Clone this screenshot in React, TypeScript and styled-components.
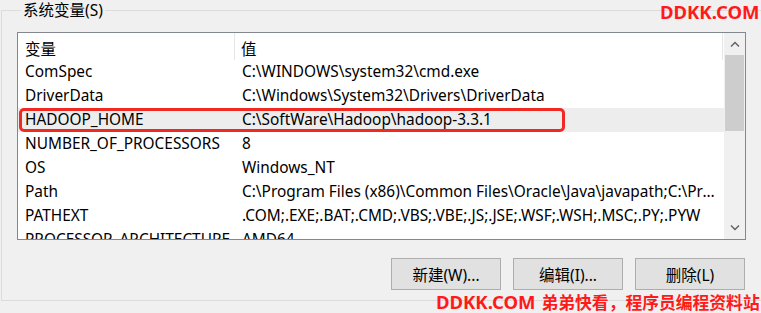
import React from "react";
import styled, { createGlobalStyle } from "styled-components";

const GlobalStyle = createGlobalStyle`
  html, body { margin: 0; padding: 0; background: #f0f0f0; }
  body { font-family: "Noto Sans", "Noto Sans CJK SC", sans-serif; color: #000; }
`;

const FONT = `"Noto Sans", "Noto Sans CJK SC", sans-serif`;

const Page = styled.div`
  position: relative;
  width: 761px;
  height: 313px;
  overflow: hidden;
  background: #f0f0f0;
`;

const Group = styled.fieldset`
  margin: 0 0 0 1px;
  padding: 0 0 0 15px;
  width: 800px;
  height: 301px;
  box-sizing: border-box;
  border: 1px solid #dcdcdc;
  min-inline-size: 0;
`;

const Legend = styled.legend`
  font-family: ${FONT};
  font-size: 15.5px;
  line-height: 20px;
  padding: 0 2px;
  margin-left: 4px;
  color: #000;
`;

const ListBox = styled.div`
  margin-top: 12px;
  width: 729px;
  height: 208px;
  box-sizing: border-box;
  border: 1px solid #828790;
  background: #fff;
  display: flex;
  overflow: hidden;
`;

const Content = styled.div`
  flex: 1;
  display: flex;
  flex-direction: column;
  overflow: hidden;
`;

const HeaderRow = styled.div`
  display: flex;
  height: 27px;
  flex-shrink: 0;
  font-family: ${FONT};
  font-size: 15.4px;
  border-right: 1px solid #e5e5e5;
  margin-right: 1px;
`;

const HeaderCell = styled.div<{ $w?: number }>`
  width: ${(p) => (p.$w ? `${p.$w}px` : "auto")};
  flex: ${(p) => (p.$w ? "none" : "1")};
  box-sizing: border-box;
  padding-left: ${(p) => (p.$w ? 7 : 6)}px;
  display: flex;
  align-items: center;
  padding-top: 4px;
  border-right: ${(p) => (p.$w ? "1px solid #e5e5e5" : "none")};
`;

const Row = styled.div<{ $sel?: boolean }>`
  position: relative;
  display: flex;
  height: 24px;
  flex-shrink: 0;
  background: ${(p) => (p.$sel ? "#ededed" : "transparent")};
  font-family: ${FONT};
  font-size: 15.4px;
  line-height: 24px;
  color: #000;
`;

const NameCell = styled.div`
  width: 217px;
  flex: none;
  box-sizing: border-box;
  padding-left: 7px;
  white-space: nowrap;
  overflow: hidden;
`;

const ValueCell = styled.div`
  flex: 1;
  min-width: 0;
  box-sizing: border-box;
  padding-left: 7px;
  padding-right: 5px;
  white-space: nowrap;
  overflow: hidden;
  text-overflow: ellipsis;
`;

const Highlight = styled.div`
  position: absolute;
  left: 1px;
  top: 0;
  width: 546px;
  height: 24px;
  box-sizing: border-box;
  border: 3px solid #f02a22;
  border-radius: 5px;
  pointer-events: none;
`;

const ScrollBar = styled.div`
  width: 21px;
  flex: none;
  background: #f0f0f0;
  display: flex;
  flex-direction: column;
`;

const ArrowBtn = styled.div`
  height: 22px;
  flex: none;
  display: flex;
  align-items: center;
  justify-content: center;
`;

const Track = styled.div`
  flex: 1;
  display: flex;
  flex-direction: column;
`;

const Thumb = styled.div`
  height: 76px;
  margin: 0 1px;
  background: #cdcdcd;
`;

const ButtonRow = styled.div`
  width: 729px;
  margin-top: 18px;
  display: flex;
  justify-content: flex-end;
  gap: 12px;
  padding-right: 1px;
  box-sizing: border-box;
`;

const Button = styled.button`
  width: 110px;
  height: 32px;
  box-sizing: border-box;
  border: 1px solid #adadad;
  background: #e1e1e1;
  font-family: ${FONT};
  font-size: 15.5px;
  color: #000;
  padding: 0;
  border-radius: 0;
`;

const Watermark = styled.div`
  position: absolute;
  color: #ff1a1a;
  font-family: ${FONT};
  font-weight: 700;
  line-height: 1;
  white-space: nowrap;
  display: flex;
  align-items: baseline;
`;

const Latin = styled.span`
  font-size: 18.5px;
`;

const Cjk = styled.span`
  font-size: 16.8px;
  margin-left: 6px;
`;

const Chevron = ({ up }: { up?: boolean }) => (
  <svg width="10" height="6" viewBox="0 0 10 6">
    <polyline
      points={up ? "1,5.5 5,1.5 9,5.5" : "1,0.5 5,4.5 9,0.5"}
      fill="none"
      stroke="#606060"
      strokeWidth="1.4"
    />
  </svg>
);

const rows: { name: string; value: string; sel?: boolean }[] = [
  { name: "ComSpec", value: "C:\\WINDOWS\\system32\\cmd.exe" },
  { name: "DriverData", value: "C:\\Windows\\System32\\Drivers\\DriverData" },
  { name: "HADOOP_HOME", value: "C:\\SoftWare\\Hadoop\\hadoop-3.3.1", sel: true },
  { name: "NUMBER_OF_PROCESSORS", value: "8" },
  { name: "OS", value: "Windows_NT" },
  {
    name: "Path",
    value:
      "C:\\Program Files (x86)\\Common Files\\Oracle\\Java\\javapath;C:\\Program Files\\Java",
  },
  { name: "PATHEXT", value: ".COM;.EXE;.BAT;.CMD;.VBS;.VBE;.JS;.JSE;.WSF;.WSH;.MSC;.PY;.PYW" },
  { name: "PROCESSOR_ARCHITECTURE", value: "AMD64" },
];

export default function App() {
  return (
    <Page>
      <GlobalStyle />
      <Group>
        <Legend>系统变量(S)</Legend>
        <ListBox>
          <Content>
            <HeaderRow>
              <HeaderCell $w={217}>变量</HeaderCell>
              <HeaderCell>值</HeaderCell>
            </HeaderRow>
            {rows.map((r) => (
              <Row key={r.name} $sel={r.sel}>
                <NameCell>{r.name}</NameCell>
                <ValueCell>{r.value}</ValueCell>
                {r.sel && <Highlight />}
              </Row>
            ))}
          </Content>
          <ScrollBar>
            <ArrowBtn>
              <Chevron up />
            </ArrowBtn>
            <Track>
              <Thumb />
            </Track>
            <ArrowBtn>
              <Chevron />
            </ArrowBtn>
          </ScrollBar>
        </ListBox>
        <ButtonRow>
          <Button>新建(W)...</Button>
          <Button>编辑(I)...</Button>
          <Button>删除(L)</Button>
        </ButtonRow>
      </Group>
      <Watermark style={{ left: 660, top: 3 }}>
        <Latin>DDKK.COM</Latin>
      </Watermark>
      <Watermark style={{ left: 436, top: 293 }}>
        <Latin>DDKK.COM</Latin>
        <Cjk>弟弟快看，程序员编程资料站</Cjk>
      </Watermark>
    </Page>
  );
}
